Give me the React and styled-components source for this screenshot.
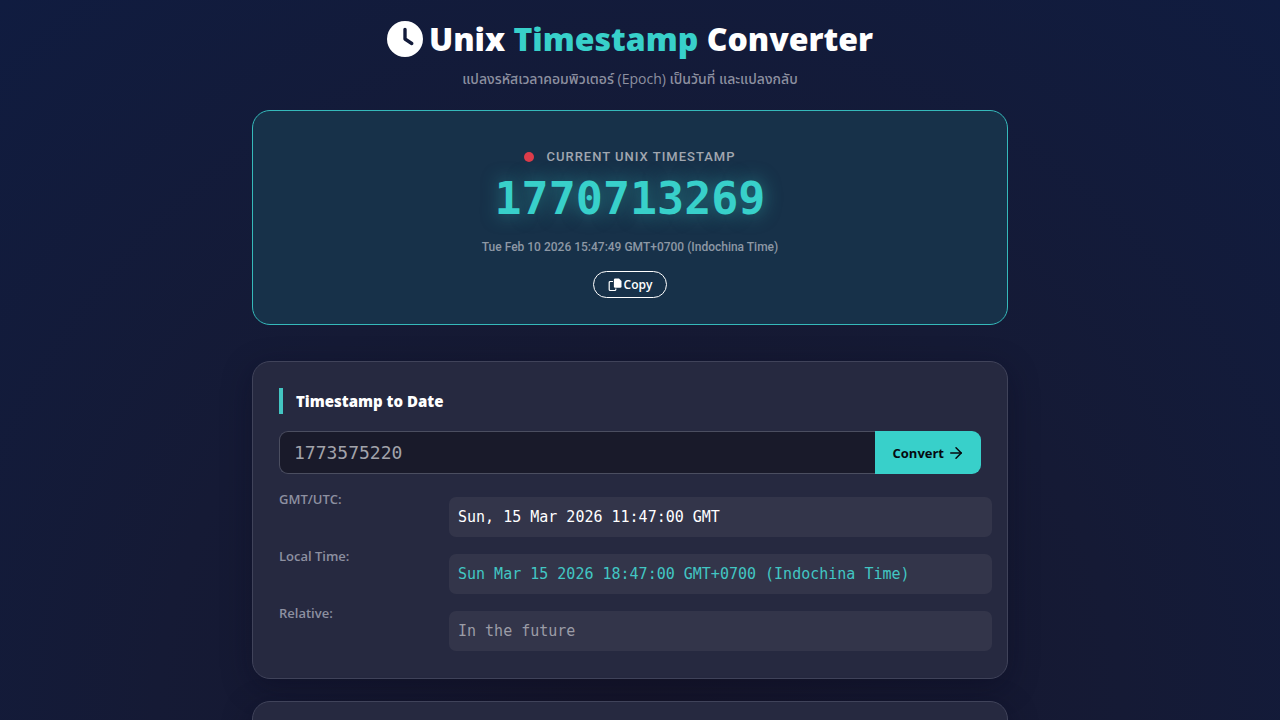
import React, { useState } from "react";
import styled, { createGlobalStyle } from "styled-components";
import { ArrowRight } from "lucide-react";
import { FaClock } from "react-icons/fa6";

const sans = `"Open Sans", "Noto Sans", "Noto Sans Thai", sans-serif`;
const mono = `"DejaVu Sans Mono", "Liberation Mono", monospace`;

const GlobalStyle = createGlobalStyle`
  * {
    box-sizing: border-box;
  }
  body {
    margin: 0;
    min-height: 100vh;
    padding-right: 20px;
    overflow-x: hidden;
    color: #fff;
    font-family: ${sans};
    background: radial-gradient(circle at 50% 100%, #16162b 0%, #151a35 50%, #101c40 100%) fixed;
  }
`;

const Page = styled.main`
  width: 60%;
  min-width: 320px;
  margin: 0 auto;
  padding-top: 16px;
`;

const Header = styled.header`
  padding-bottom: 21px;
  text-align: center;
`;

const Title = styled.h1`
  display: flex;
  align-items: center;
  justify-content: center;
  margin: 0;
  font-size: 32px;
  line-height: 46px;
  font-weight: 800;
  white-space: pre;
  svg {
    width: 36px;
    height: 36px;
    margin-right: 6px;
  }
  span {
    color: #38d0ca;
  }
`;

const Subtitle = styled.p`
  margin: 7px 0 0;
  font-size: 14px;
  line-height: 20px;
  font-weight: 500;
  color: #8d90a0;
`;

const Card = styled.section`
  border: 1px solid #40435a;
  border-radius: 18px;
  background: #262940;
  box-shadow: 0 8px 30px rgba(10, 10, 30, 0.35);
  padding: 26px 26px 27px;
  margin-bottom: 22px;
`;

const LiveCard = styled(Card)`
  display: flex;
  flex-direction: column;
  align-items: center;
  padding: 36px 26px 26px;
  margin-bottom: 36px;
  border-color: #35b9ba;
  background: #173149;
  box-shadow: none;
`;

const LiveLabel = styled.div`
  display: flex;
  align-items: center;
  gap: 12px;
  font-family: Roboto, ${sans};
  font-size: 13px;
  line-height: 20px;
  font-weight: 500;
  letter-spacing: 1px;
  text-transform: uppercase;
  color: #a1a7b0;
`;

const Dot = styled.span`
  width: 10px;
  height: 10px;
  border-radius: 50%;
  background: #dc3c4a;
`;

const LiveNumber = styled.div`
  font-family: ${mono};
  font-size: 45px;
  line-height: 64px;
  font-weight: 700;
  color: #38d0ca;
  text-shadow: 0 0 18px rgba(56, 208, 202, 0.5);
`;

const LiveDate = styled.div`
  margin: 6px 0 14px;
  font-family: Roboto, ${sans};
  font-size: 12px;
  line-height: 20px;
  font-weight: 500;
  color: #8d98a5;
`;

const CopyButton = styled.button`
  display: flex;
  align-items: center;
  gap: 2px;
  height: 27px;
  padding: 0 14px;
  border: 1px solid #fff;
  border-radius: 14px;
  background: transparent;
  color: #fff;
  font-family: ${sans};
  font-size: 12px;
  font-weight: 600;
  cursor: pointer;
`;

const CardTitle = styled.h2`
  margin: 0 0 17px;
  padding-left: 13px;
  border-left: 4px solid #43c5c2;
  font-size: 15px;
  line-height: 26px;
  font-weight: 800;
`;

const ConvertForm = styled.form`
  display: flex;
  height: 43px;
  margin-bottom: 15px;
`;

const TimestampInput = styled.input`
  flex: 1;
  min-width: 0;
  padding: 0 14px;
  border: 1px solid #4b4e60;
  border-right: 0;
  border-radius: 9px 0 0 9px;
  background: #191a2a;
  color: #a2a3aa;
  font-family: ${mono};
  font-size: 18px;
  outline: none;
`;

const ConvertButton = styled.button`
  display: flex;
  align-items: center;
  justify-content: center;
  gap: 3px;
  padding: 0 16px 0 18px;
  border: 0;
  border-radius: 0 9px 9px 0;
  background: #38d0ca;
  color: #06090f;
  font-family: ${sans};
  font-size: 13px;
  font-weight: 700;
  cursor: pointer;
`;

const Results = styled.dl`
  display: grid;
  grid-template-columns: 170px 1fr;
  row-gap: 9px;
  margin: 0 -11px 0 0;
`;

const ResultLabel = styled.dt`
  font-size: 13px;
  line-height: 20px;
  font-weight: 600;
  color: #8d90a0;
`;

const ResultValue = styled.dd`
  margin: 8px 0 0;
  padding: 8px 9px;
  border-radius: 7px;
  background: #33354a;
  color: ${(props) => props.$color || "#fff"};
  font-family: ${mono};
  font-size: 15px;
  line-height: 24px;
`;

const CopyIcon = () => (
  <svg width="14" height="14" viewBox="0 0 14 14" aria-hidden="true">
    <path
      d="M5 3.5H2.2a1 1 0 0 0-1 1v7a1 1 0 0 0 1 1h4.6a1 1 0 0 0 1-1V10.5"
      fill="none"
      stroke="currentColor"
      strokeWidth="1.2"
    />
    <path
      d="M7.2 0.500H11L13.500 3V8.500a1.300 1.300 0 0 1-1.300 1.300H7.200a1.300 1.300 0 0 1-1.300-1.300V1.800A1.300 1.300 0 0 1 7.200 0.500z"
      fill="currentColor"
    />
  </svg>
);

const results = [
  { label: "GMT/UTC:", value: "Sun, 15 Mar 2026 11:47:00 GMT" },
  {
    label: "Local Time:",
    value: "Sun Mar 15 2026 18:47:00 GMT+0700 (Indochina Time)",
    color: "#42c6c3",
  },
  { label: "Relative:", value: "In the future", color: "#9b9ca6" },
];

export default function App() {
  const [value, setValue] = useState("1773575220");

  return (
    <>
      <GlobalStyle />
      <Page>
        <Header>
          <Title>
            <FaClock />
            Unix <span>Timestamp</span> Converter
          </Title>
          <Subtitle>แปลงรหัสเวลาคอมพิวเตอร์ (Epoch) เป็นวันที่ และแปลงกลับ</Subtitle>
        </Header>
        <LiveCard>
          <LiveLabel>
            <Dot />
            Current Unix Timestamp
          </LiveLabel>
          <LiveNumber>1770713269</LiveNumber>
          <LiveDate>Tue Feb 10 2026 15:47:49 GMT+0700 (Indochina Time)</LiveDate>
          <CopyButton type="button">
            <CopyIcon />
            Copy
          </CopyButton>
        </LiveCard>
        <Card>
          <CardTitle id="to-date">Timestamp to Date</CardTitle>
          <ConvertForm onSubmit={(e) => e.preventDefault()}>
            <TimestampInput
              aria-labelledby="to-date"
              value={value}
              onChange={(e) => setValue(e.target.value)}
            />
            <ConvertButton type="submit">
              Convert
              <ArrowRight size={18} strokeWidth={2} />
            </ConvertButton>
          </ConvertForm>
          <Results>
            {results.map((r) => (
              <React.Fragment key={r.label}>
                <ResultLabel>{r.label}</ResultLabel>
                <ResultValue $color={r.color}>{r.value}</ResultValue>
              </React.Fragment>
            ))}
          </Results>
        </Card>
        <Card />
      </Page>
    </>
  );
}
